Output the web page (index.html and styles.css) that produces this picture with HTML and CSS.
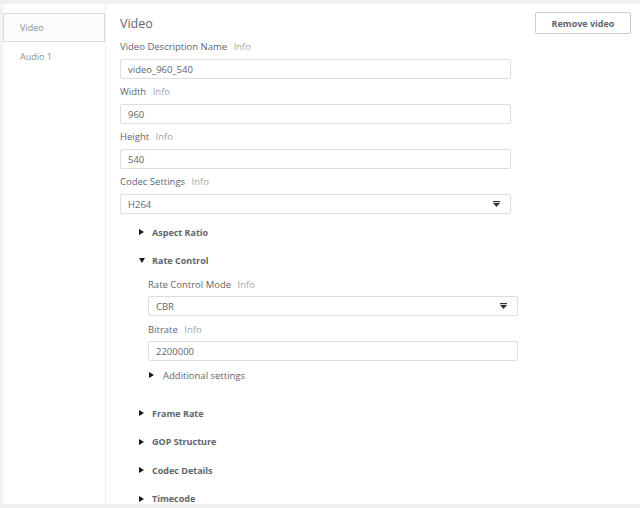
FILE: index.html
```html
<!DOCTYPE html>
<html>
<head>
<meta charset="utf-8">
<link rel="stylesheet" href="styles.css">
</head>
<body>
<div class="frame">
  <nav class="sidebar">
    <div class="tab active">Video</div>
    <div class="tab">Audio 1</div>
  </nav>
  <main class="main">
    <div class="header">
      <h1 class="title">Video</h1>
      <button class="btn">Remove video</button>
    </div>
    <div class="field">
      <div class="label">Video Description Name <span class="info">Info</span></div>
      <div class="input">video_960_540</div>
    </div>
    <div class="field">
      <div class="label">Width <span class="info">Info</span></div>
      <div class="input">960</div>
    </div>
    <div class="field">
      <div class="label">Height <span class="info">Info</span></div>
      <div class="input">540</div>
    </div>
    <div class="field">
      <div class="label">Codec Settings <span class="info">Info</span></div>
      <div class="input select">H264<svg class="caret" width="7" height="6" viewBox="0 0 7 6"><rect x="0" y="0" width="7" height="1.2" fill="#333"/><path d="M0 2 L7 2 L3.5 6 Z" fill="#333"/></svg></div>
    </div>
    <div class="section first"><span class="tri right"></span>Aspect Ratio</div>
    <div class="section"><span class="tri down"></span>Rate Control</div>
    <div class="nested">
      <div class="field">
        <div class="label">Rate Control Mode <span class="info">Info</span></div>
        <div class="input select">CBR<svg class="caret" width="7" height="6" viewBox="0 0 7 6"><rect x="0" y="0" width="7" height="1.2" fill="#333"/><path d="M0 2 L7 2 L3.5 6 Z" fill="#333"/></svg></div>
      </div>
      <div class="field">
        <div class="label">Bitrate <span class="info">Info</span></div>
        <div class="input">2200000</div>
      </div>
      <div class="sub"><span class="tri right"></span>Additional settings</div>
    </div>
    <div class="section spaced"><span class="tri right"></span>Frame Rate</div>
    <div class="section"><span class="tri right"></span>GOP Structure</div>
    <div class="section"><span class="tri right"></span>Codec Details</div>
    <div class="section"><span class="tri right"></span>Timecode</div>
  </main>
</div>
</body>
</html>
```
FILE: styles.css
```css
* { box-sizing: border-box; }
html, body { margin: 0; padding: 0; background: #fff; }
body {
  font-family: "Open Sans", "Noto Sans", sans-serif;
  font-size: 9.5px;
  color: #5f666e;
  width: 640px;
  height: 508px;
  overflow: hidden;
}
.frame {
  display: grid;
  grid-template-columns: 103px 1fr;
  height: 508px;
  border-top: 4px solid #eff0f0;
  border-left: 3px solid #f1f2f2;
  border-bottom: 4px solid #eef0f0;
}
.sidebar {
  border-right: 1px solid #eceeee;
  padding-top: 9px;
}
.tab {
  height: 29px;
  display: flex;
  align-items: center;
  padding-left: 17px;
  color: #8a9394;
  font-size: 9px;
}
.tab.active {
  border: 1px solid #d9dcdc;
  background: #fbfbfb;
  padding-left: 16px;
}
.main {
  padding-left: 14px;
  padding-right: 9px;
}
.header {
  display: flex;
  justify-content: space-between;
  align-items: center;
  padding-top: 8px;
  margin-bottom: 6px;
}
.title {
  margin: 0;
  font-size: 12.5px;
  font-weight: 400;
  color: #5f666e;
}
.btn {
  width: 96px;
  height: 22px;
  border: 1px solid #c9cccc;
  border-radius: 2px;
  background: #fff;
  font-family: inherit;
  font-size: 9px;
  font-weight: 700;
  color: #5f666e;
  padding: 0;
}
.field { width: 391px; margin-bottom: 6px; }
.label {
  height: 14px;
  line-height: 14px;
  margin-bottom: 5px;
  color: #5f666e;
}
.info { color: #a0a8a9; margin-left: 4px; }
.input {
  height: 20px;
  border: 1px solid #dcdfdf;
  border-radius: 2px;
  padding-left: 7px;
  display: flex;
  align-items: center;
  color: #5f666e;
}
.select { justify-content: space-between; padding-right: 10px; }
.caret { display: block; }
.section {
  height: 28.5px;
  display: flex;
  align-items: center;
  padding-left: 19px;
  font-weight: 700;
  color: #5f666e;
  font-size: 9px;
}
.section.first { margin-top: -2px; }
.section.spaced { margin-top: 13px; }
.tri {
  width: 0;
  height: 0;
  margin-right: 8px;
}
.tri.right {
  border-top: 3px solid transparent;
  border-bottom: 3px solid transparent;
  border-left: 5px solid #16191f;
}
.tri.down {
  border-left: 3px solid transparent;
  border-right: 3px solid transparent;
  border-top: 5px solid #16191f;
  margin-right: 7px;
}
.nested {
  padding-left: 28px;
  margin-top: 3px;
}
.nested .field { width: 370px; margin-bottom: 7px; }
.nested .label { margin-bottom: 4px; }
.sub {
  height: 22px;
  margin-top: -4px;
  display: flex;
  align-items: center;
  padding-left: 1px;
  color: #5f666e;
}
.sub .tri.right { margin-right: 9px; }
```
